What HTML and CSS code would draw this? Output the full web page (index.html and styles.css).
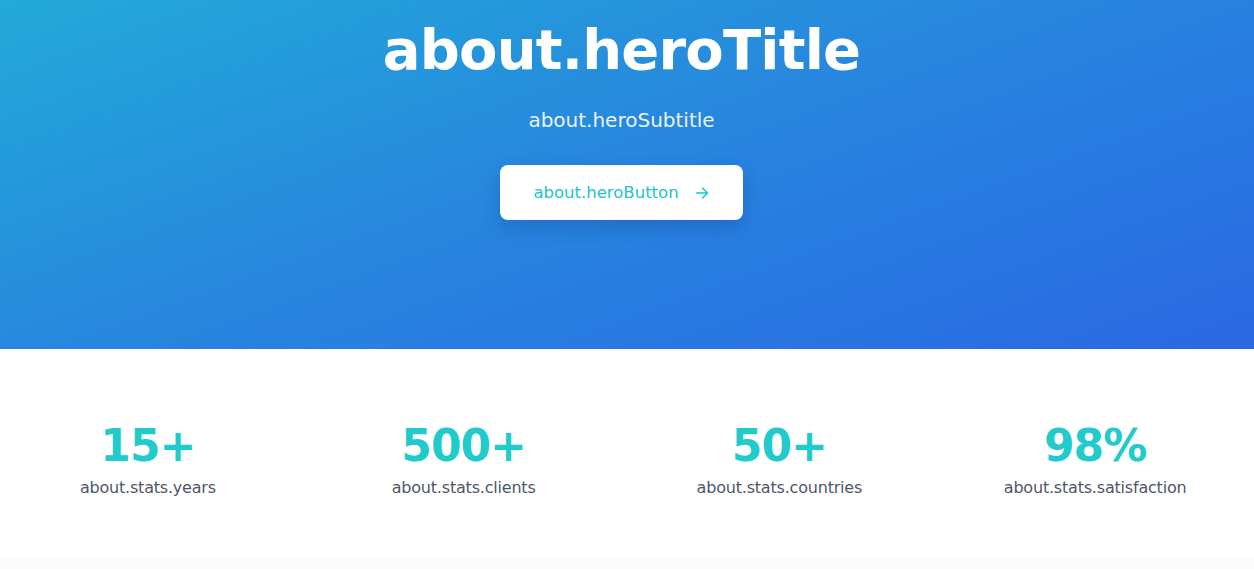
FILE: index.html
```html
<!DOCTYPE html>
<html lang="en">
<head>
<meta charset="utf-8">
<title>About</title>
<link rel="stylesheet" href="styles.css">
</head>
<body>
<div class="page">
  <section class="hero">
    <h1 class="hero-title">about.heroTitle</h1>
    <p class="hero-subtitle">about.heroSubtitle</p>
    <a class="hero-button" href="#">
      <span>about.heroButton</span>
      <svg class="arrow" width="16" height="16" viewBox="0 0 16 16" fill="none" stroke="currentColor" stroke-width="1.6" stroke-linecap="round" stroke-linejoin="round"><path d="M2.5 8h11M8.5 3l5 5-5 5"/></svg>
    </a>
  </section>
  <section class="stats">
    <div class="stat"><div class="stat-num">15+</div><div class="stat-label">about.stats.years</div></div>
    <div class="stat"><div class="stat-num">500+</div><div class="stat-label">about.stats.clients</div></div>
    <div class="stat"><div class="stat-num">50+</div><div class="stat-label">about.stats.countries</div></div>
    <div class="stat"><div class="stat-num">98%</div><div class="stat-label">about.stats.satisfaction</div></div>
  </section>
  <div class="next"></div>
</div>
</body>
</html>
```
FILE: styles.css
```css
* { box-sizing: border-box; }
html, body { margin: 0; padding: 0; background: #fff; overflow: hidden; }
body { font-family: "DejaVu Sans", "Liberation Sans", sans-serif; }
.page { width: 100%; }
.hero {
  height: 349px;
  background: linear-gradient(160deg, #22aad8 0%, #2788de 45%, #2a68e4 100%);
  display: flex;
  flex-direction: column;
  align-items: center;
  padding: 14px 11px 0 0;
  color: #fff;
}
.hero-title {
  margin: 0;
  font-size: 56px;
  line-height: 72px;
  font-weight: 700;
  letter-spacing: -0.8px;
}
.hero-subtitle {
  margin: 20px 0 0;
  font-size: 20px;
  line-height: 28px;
  font-weight: 400;
  color: rgba(255,255,255,0.92);
}
.hero-button {
  margin-top: 31px;
  width: 243px;
  height: 55px;
  background: #fff;
  border-radius: 8px;
  display: flex;
  align-items: center;
  justify-content: center;
  gap: 15px;
  color: #22c4cb;
  text-decoration: none;
  font-size: 16.5px;
  box-shadow: 0 8px 18px rgba(10, 40, 110, 0.22);
}
.arrow { display: block; }
.stats {
  display: grid;
  grid-template-columns: repeat(4, 1fr);
  column-gap: 20px;
  padding: 69px 11px 0 0;
}
.stat { text-align: center; }
.stat-num {
  font-size: 44px;
  line-height: 56px;
  font-weight: 700;
  color: #22cbcb;
  letter-spacing: -1px;
}
.stat-label {
  margin-top: 2px;
  font-size: 16px;
  line-height: 24px;
  color: #50566a;
  letter-spacing: -0.2px;
}
.next {
  margin-top: 58px;
  height: 20px;
  background: #fcfcfc;
}
```
